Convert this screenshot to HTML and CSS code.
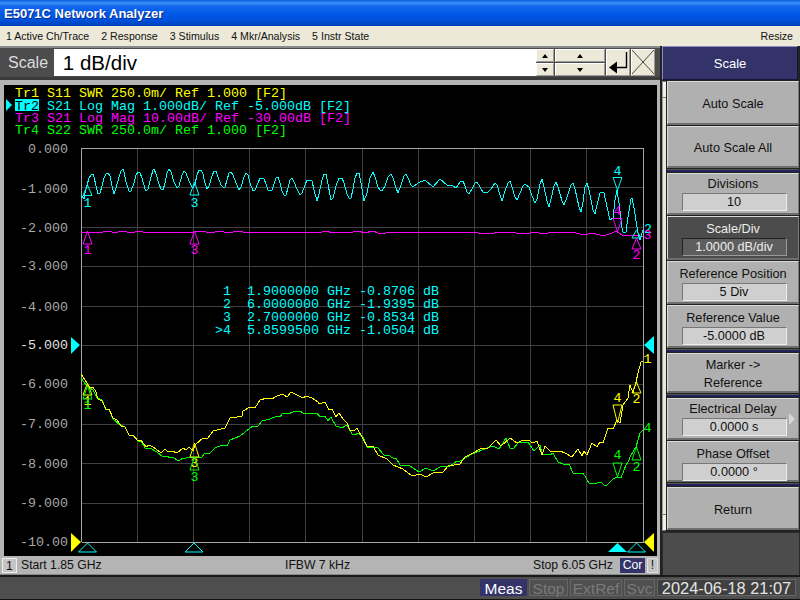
FILE: index.html
```html
<!DOCTYPE html>
<html lang="en">
<head>
    <meta charset="UTF-8">
    <meta name="viewport" content="width=device-width, initial-scale=1.0">
    <title>E5071C Network Analyzer</title>
    <link rel="stylesheet" href="styles.css">
</head>
<body>
<div class="app">
	<div class="title-bar">E5071C Network Analyzer</div>
	<div class="menu-bar">
		<span class="menu-item">1 Active Ch/Trace</span>
		<span class="menu-item">2 Response</span>
		<span class="menu-item">3 Stimulus</span>
		<span class="menu-item">4 Mkr/Analysis</span>
		<span class="menu-item">5 Instr State</span>
		<span class="menu-resize">Resize</span>
	</div>

	<div class="main">
		<div class="left">
			<!-- entry bar -->
			<div class="entry-bar">
				<span class="entry-label">Scale</span>
				<div class="entry-input">1 dB/div</div>
				<div class="spin spin-small">
					<div class="spin-btn"><i class="arrow-up"></i></div>
					<div class="spin-btn"><i class="arrow-down"></i></div>
				</div>
				<div class="spin spin-big">
					<div class="spin-btn"><i class="arrow-up"></i></div>
					<div class="spin-btn"><i class="arrow-down"></i></div>
				</div>
				<div class="entry-btn">
					<svg width="24" height="26" viewBox="0 0 24 26">
						<path d="M20.5 3V18.5H10" fill="none" stroke="#000" stroke-width="1.4"/>
						<path d="M3 18.5L11 12.5V24.5Z" fill="#000"/>
					</svg>
				</div>
				<div class="entry-btn">
					<svg width="24" height="26" viewBox="0 0 24 26">
						<path d="M1 1L23 25M23 1L1 25" fill="none" stroke="#222" stroke-width="0.8"/>
					</svg>
				</div>
			</div>

			<!-- chart, viewBox keeps the screen coordinates -->
			<div class="plot">
				<svg class="plot-svg" width="654" height="471" viewBox="4 85 654 471">
					<text class="tr yellow" x="15" y="97">Tr1 S11 SWR 250.0m/ Ref 1.000 [F2]</text>
					<polygon class="fill-cyan" points="6,99 12,105 6,111"/>
					<rect class="fill-cyan" x="15" y="99" width="24" height="12"/>
					<text class="tr black" x="15" y="110">Tr2</text>
					<text class="tr cyan" x="47" y="110">S21 Log Mag 1.000dB/ Ref -5.000dB [F2]</text>
					<text class="tr magenta" x="15" y="122">Tr3 S21 Log Mag 10.00dB/ Ref -30.00dB [F2]</text>
					<text class="tr green" x="15" y="134">Tr4 S22 SWR 250.0m/ Ref 1.000 [F2]</text>

					<g class="grid">
						<path d="M81 187.5H643M81 227H643M81 266.5H643M81 306H643M81 345.5H643M81 384.5H643M81 424H643M81 463.5H643M81 503H643"/>
						<path d="M137.5 148V542M193.5 148V542M249.5 148V542M305.5 148V542M362.5 148V542M418.5 148V542M474.5 148V542M530.5 148V542M586.5 148V542"/>
					</g>
					<path class="frame" d="M81.5 542V148.5H643.5V542.5H81.5"/>

					<g class="tr axis">
						<text x="68" y="153">0.000</text>
						<text x="68" y="193">-1.000</text>
						<text x="68" y="232">-2.000</text>
						<text x="68" y="270">-3.000</text>
						<text x="68" y="311">-4.000</text>
						<text class="axis-ref" x="68" y="349">-5.000</text>
						<text x="68" y="388">-6.000</text>
						<text x="68" y="428">-7.000</text>
						<text x="68" y="468">-8.000</text>
						<text x="68" y="507">-9.000</text>
						<text x="68" y="546">-10.00</text>
					</g>

					<polygon class="fill-cyan" points="71,337 80,345 71,354"/>
					<polygon class="fill-cyan" points="654,336 644,345 654,354"/>
					<polygon class="fill-yellow" points="71,533 81,542 71,552"/>
					<polygon class="fill-yellow" points="654,533 644,542 654,552"/>

					<polygon class="tick" points="87.5,543 78.5,552 96.5,552"/>
					<polygon class="tick" points="194,543 185,552 203,552"/>
					<polygon class="fill-cyan" points="617.5,543 608,552 627,552"/>
					<polygon class="tick" points="636.5,543 627.5,552 645.5,552"/>

					<polyline class="trace line-magenta" points="81,232 85,233 88,232 95,232 98,233 103,232 107,231 112,232 114,233 118,232 122,231 127,232 130,233 135,232 138,231 143,232 149,233 154,232 158,232 162,233 168,232 174,232 179,233 185,232 190,233 194,232 200,231 206,232 212,233 218,231 224,232 230,233 236,231 243,232 250,232 256,233 262,232 268,232 272,233 278,232 284,232 292,232 298,233 303,232 308,233 316,232 322,232 327,231 332,233 338,232 344,232 350,233 356,231 359,231 364,233 373,231 378,233 386,233 394,232 402,233 410,232 416,233 426,232 436,232 444,232 450,233 458,232 466,233 471,232 478,233 486,233 494,233 500,232 506,233 510,232 516,233 524,233 530,233 536,232 542,234 548,233 556,232 564,233 572,232 580,234 588,234 592,233 600,235 606,235 612,233 616,231 622,235 630,236 636,235 643,237"/>

					<polyline class="trace line-cyan" points="81,195 84,199 85,193 87,185 89,178 91,175 93,174 94,177 96,186 98,194 100,193 102,186 104,178 106,174 108,173 110,176 112,186 114,194 116,188 119,177 121,171 123,169 124,172 126,182 129,191 131,191 134,183 136,175 138,172 140,173 142,178 145,189 146,191 148,189 151,177 153,170 154,169 156,174 159,184 161,189 163,190 165,183 167,173 169,169 171,172 174,182 177,188 179,186 182,175 184,171 186,173 189,181 192,187 193,188 195,184 197,175 199,170 201,170 203,174 205,183 207,189 209,186 212,176 214,171 216,171 218,177 221,185 223,187 225,187 227,180 229,173 231,172 233,175 236,183 239,190 241,187 244,177 246,173 248,175 250,183 253,191 255,190 258,183 260,178 262,178 264,179 266,184 268,190 272,190 274,184 276,178 278,177 280,183 282,191 284,195 286,195 288,188 290,180 292,178 294,182 297,189 300,195 302,193 305,185 307,180 310,180 312,181 314,190 317,201 319,194 322,180 324,174 326,174 328,184 331,200 333,198 336,186 339,178 342,178 344,183 347,194 349,198 351,198 353,189 355,178 357,173 359,173 361,183 364,201 367,193 370,178 373,172 375,177 378,187 380,190 382,191 385,186 388,177 391,174 393,178 396,188 398,193 401,185 404,176 406,174 408,178 411,185 413,187 418,183 425,180 433,187 440,179 447,185 452,185 456,188 460,182 463,181 465,186 467,192 469,194 472,189 475,183 477,182 480,187 483,192 488,192 491,189 495,183 497,185 500,195 502,201 505,191 508,183 510,181 512,187 515,197 517,200 520,193 523,186 525,184 529,187 532,196 535,203 537,199 540,184 542,179 544,187 547,201 549,207 551,199 554,186 556,182 558,187 562,201 564,205 567,197 571,185 573,183 575,189 579,207 581,212 583,202 585,187 587,183 589,190 593,210 595,214 597,205 600,193 601,192 604,193 607,207 610,220 613,218 615,200 617,190 619,203 622,228 623,232 626,232 628,217 631,199 632,198 634,208 638,233 640,240 643,230"/>

					<polyline class="trace line-green" points="81,378 86,385 93,390 97,398 102,400 106,410 109,409 113,419 120,425 125,427 129,435 133,436 138,441 141,441 145,448 150,448 157,452 163,457 167,456 170,458 173,457 177,460 180,460 183,458 186,458 189,457 202,457 205,453 210,453 215,448 222,445 227,446 230,440 240,436 250,428 253,426 258,426 262,421 270,419 277,416 280,417 283,413 288,414 293,412 300,411 303,413 307,413 312,414 317,413 320,417 325,416 328,421 331,417 336,426 342,428 347,425 352,434 355,435 358,433 363,437 367,447 373,448 377,447 384,455 388,455 393,458 396,458 400,465 410,466 419,472 426,468 433,471 442,466 450,466 457,461 460,461 467,457 472,454 482,450 493,446 499,449 506,438 510,448 513,449 518,443 528,442 534,451 540,445 542,454 550,455 553,453 558,462 563,464 569,464 573,473 578,474 583,473 589,483 597,483 601,482 604,485 607,485 613,479 617,477 621,478 626,465 628,462 631,455 636,447 640,433 643,430"/>

					<polyline class="trace line-yellow" points="81,374 87,383 90,388 93,387 96,392 98,399 102,401 106,409 109,409 113,418 117,420 121,426 125,427 129,435 133,435 138,441 141,440 146,447 149,445 153,447 156,449 161,453 165,449 168,452 172,451 177,453 183,448 186,450 189,447 193,451 195,445 203,438 208,438 213,431 225,428 230,418 237,417 242,416 243,411 250,407 255,408 260,400 267,398 272,399 277,396 283,394 287,397 291,392 303,398 306,396 312,398 318,402 319,404 325,402 329,410 332,409 336,417 339,413 343,419 347,423 350,430 355,430 357,428 362,437 367,446 373,446 378,455 387,459 393,465 403,469 412,476 420,474 426,477 433,473 443,472 448,466 460,464 465,457 473,453 482,448 488,448 496,440 501,446 510,438 517,443 523,440 528,440 533,443 537,441 542,455 545,446 551,452 560,451 565,453 572,457 578,449 582,456 584,451 587,455 592,443 597,447 600,442 603,443 608,428 613,429 617,420 620,423 623,405 628,398 630,385 633,393 636,382 638,373 641,362 643,361"/>

					<!-- markers -->
					<g class="mark mark-cyan">
						<polygon points="87.5,185 83,195.5 92,195.5"/><text x="87.5" y="207">1</text>
						<polygon points="194.5,182 190,195 199,195"/><text x="194.5" y="207">3</text>
						<polygon points="617.5,190 613,177.5 622,177.5"/><text x="617.5" y="175">4</text>
						<polygon points="636.5,230 632,238 641,238"/>
						<text x="648" y="233">2</text>
					</g>
					<g class="mark mark-magenta">
						<polygon points="87.5,231 83,244 92,244"/><text x="87.5" y="254">1</text>
						<polygon points="194.5,231 190,244 199,244"/><text x="194.5" y="254">3</text>
						<polygon points="617.5,231.5 613,218.5 622,218.5"/><text x="617.5" y="215">4</text>
						<polygon points="636.5,238 632,249 641,249"/><text x="636.5" y="259">2</text>
						<text x="647.5" y="239">3</text>
					</g>
					<g class="mark mark-yellow">
						<polygon points="87.5,383 83,395 92,395"/><text x="87.5" y="405">1</text>
						<polygon points="194.5,443 190,457 199,457"/><text x="194.5" y="467">3</text>
						<polygon points="617.5,423 613,405 622,405"/><text x="617.5" y="402">4</text>
						<polygon points="636.5,382 632,393 641,393"/><text x="636.5" y="403">2</text>
						<text x="647.5" y="363">1</text>
					</g>
					<g class="mark mark-green">
						<polygon points="87.5,386 83,399 92,399"/><text x="87.5" y="409">1</text>
						<polygon points="194.5,457 190,470 199,470"/><text x="194.5" y="481">3</text>
						<polygon points="617.5,477 613,463 622,463"/><text x="617.5" y="459">4</text>
						<polygon points="636.5,447 632,460 641,460"/><text x="636.5" y="471">2</text>
						<text x="647.5" y="432">4</text>
					</g>

					<g class="tr cyan readout">
						<text xml:space="preserve" x="215" y="295"> 1  1.9000000 GHz -0.8706 dB</text>
						<text xml:space="preserve" x="215" y="308"> 2  6.0000000 GHz -1.9395 dB</text>
						<text xml:space="preserve" x="215" y="321"> 3  2.7000000 GHz -0.8534 dB</text>
						<text xml:space="preserve" x="215" y="334">&gt;4  5.8599500 GHz -1.0504 dB</text>
					</g>
				</svg>
			</div>

			<div class="status-bar">
				<span class="status-ch">1</span>
				<span class="status-start">Start 1.85 GHz</span>
				<span class="status-ifbw">IFBW 7 kHz</span>
				<span class="status-stop">Stop 6.05 GHz</span>
				<span class="status-cor">Cor</span>
				<span class="status-warn">!</span>
			</div>
		</div>

		<div class="side">
			<div class="key-head">Scale</div>
			<div class="side-body">
				<div class="strip"><i class="strip-btn"></i><i class="strip-btn"></i></div>
				<div class="keys">
					<div class="key">Auto Scale</div>
					<div class="key">Auto Scale All</div>
					<div class="key-sep"></div>
					<div class="key key-val key-tight">Divisions<span class="val">10</span></div>
					<div class="key key-val key-active">Scale/Div<span class="val">1.0000 dB/div</span></div>
					<div class="key key-val">Reference Position<span class="val">5 Div</span></div>
					<div class="key key-val">Reference Value<span class="val">-5.0000 dB</span></div>
					<div class="key-sep"></div>
					<div class="key">Marker -&gt;<br>Reference</div>
					<div class="key-sep"></div>
					<div class="key key-val key-tight key-more">Electrical Delay<span class="val">0.0000 s</span></div>
					<div class="key key-val">Phase Offset<span class="val">0.0000 °</span></div>
					<div class="key-sep"></div>
					<div class="key">Return</div>
				</div>
			</div>
			<div class="side-blank"></div>
		</div>
	</div>

	<div class="footer">
		<span class="flag flag-on flag-meas">Meas</span>
		<span class="flag flag-stop">Stop</span>
		<span class="flag flag-ext">ExtRef</span>
		<span class="flag flag-svc">Svc</span>
		<span class="flag flag-date">2024-06-18 21:07</span>
	</div>
</div>
</body>
</html>
```

FILE: styles.css
```css
* {box-sizing: border-box;}
html, body {margin: 0; padding: 0;}
body {width: 800px; height: 600px; overflow: hidden; background: #222; font-family: "Liberation Sans", Arial, sans-serif;}
.app {width: 800px; height: 600px; display: flex; flex-direction: column;}

/* title + menu */
.title-bar {height: 26px; padding: 0 4px; line-height: 27px; font-size: 13px; font-weight: bold; color: #fff; text-shadow: 1px 1px 0 #0a2a90;
	background: linear-gradient(to bottom, #0a5ce0 0, #3d92f8 3px, #1468ee 6px, #0058e6 14px, #0052dc 20px, #0040b8 26px);}
.menu-bar {height: 20px; display: flex; align-items: center; background: #ece9d8; font-size: 10.6px; color: #111; padding-left: 6px;}
.menu-item {margin-right: 12px;}
.menu-resize {margin-left: auto; margin-right: 7px;}

.main {height: 529px; display: flex;}
.left {width: 660px; display: flex; flex-direction: column;}

/* entry bar */
.entry-bar {height: 34px; display: flex; align-items: center; background: #4c4c4c; border-top: 2px solid #8a8a8a; border-bottom: 3px solid #3a3a3a; padding-right: 4px;}
.entry-label {width: 54px; padding-left: 8px; font-size: 16px; color: #ddd;}
.entry-input {width: 484px; height: 27px; background: #fff; padding-left: 9px; font-size: 20.5px; line-height: 27px; color: #000;}
.spin {display: flex; flex-direction: column; gap: 1px; height: 27px; margin-right: 1px;}
.spin-small {width: 18px;}
.spin-big {width: 50px;}
.spin-btn {flex: 1; display: flex; align-items: center; justify-content: center; background: #ece9d8; border: 1px solid; border-color: #fff #999 #999 #fff;}
.arrow-up {border: 3px solid transparent; border-top: 0; border-bottom: 4px solid #000;}
.arrow-down {border: 3px solid transparent; border-bottom: 0; border-top: 4px solid #000;}
.entry-btn {width: 24px; height: 27px; margin-right: 1px; background: #ece9d8; border: 1px solid; border-color: #fff #999 #999 #fff; overflow: hidden;}
.entry-btn svg {display: block; margin: -1px;}

/* plot */
.plot {height: 476px; background: #000; border: solid #b4b4b4; border-width: 5px 3px 0 4px; overflow: hidden;}
.plot-svg {display: block; margin-right: -1px;}
.tr {font-family: "Liberation Mono", "DejaVu Sans Mono", monospace; font-size: 13.33px; white-space: pre;}
.yellow {fill: #ffff00;}
.cyan {fill: #00ffff;}
.magenta {fill: #ff00ff;}
.green {fill: #00ff00;}
.black {fill: #000;}
.fill-cyan {fill: #00ffff;}
.fill-yellow {fill: #ffff00;}
.grid path {stroke: #404040; stroke-width: 1; fill: none; shape-rendering: crispEdges;}
.frame {stroke: #a8a8a8; stroke-width: 1; fill: none; shape-rendering: crispEdges;}
.axis text {fill: #a8a8a8; text-anchor: end;}
.axis .axis-ref {fill: #e0e0e0;}
.tick {fill: #000; stroke: #00ffff; stroke-width: 1;}
.trace {fill: none; stroke-width: 1; shape-rendering: crispEdges;}
.line-cyan {stroke: #00ffff;}
.line-magenta {stroke: #ff00ff;}
.line-yellow {stroke: #ffff00;}
.line-green {stroke: #00ff00;}
.mark text {font-family: "Liberation Mono", "DejaVu Sans Mono", monospace; font-size: 13.33px; text-anchor: middle;}
.mark polygon {fill: none; stroke-width: 1;}
.mark-cyan polygon {stroke: #00ffff;}
.mark-cyan text {fill: #00ffff;}
.mark-magenta polygon {stroke: #ff00ff;}
.mark-magenta text {fill: #ff00ff;}
.mark-yellow polygon {stroke: #ffff00;}
.mark-yellow text {fill: #ffff00;}
.mark-green polygon {stroke: #00ff00;}
.mark-green text {fill: #00ff00;}

/* status under the plot */
.status-bar {height: 19px; display: flex; align-items: center; background: #b4b4b4; font-size: 12.2px; color: #111; white-space: nowrap; border-bottom: 1px solid #888;}
.status-ch {width: 15px; height: 15px; flex-shrink: 0; margin-left: 2px; text-align: center; line-height: 14px; background: #c4c4c4; border: 1px solid #eee;}
.status-start {width: 80px; margin-left: 4px; flex-shrink: 0;}
.status-ifbw {width: 64px; margin-left: 184px; flex-shrink: 0;}
.status-stop {width: 80px; margin-left: 184px; flex-shrink: 0;}
.status-cor {width: 25px; height: 15px; flex-shrink: 0; margin-left: 7px; line-height: 15px; text-align: center; background: #33336a; color: #fff;}
.status-warn {width: 11px; height: 15px; flex-shrink: 0; margin-left: 2px; line-height: 13px; text-align: center; background: #c4c4c4; border: 1px solid #ddd;}

/* softkeys */
.side {width: 140px; display: flex; flex-direction: column; padding-left: 2px; background: #222;}
.key-head {height: 34px; margin-right: 2px; line-height: 33px; text-align: center; font-size: 13px; color: #fff; background: #33336a; border: 1px solid; border-color: #8c8cc0 #15153a #15153a #8c8cc0; flex-shrink: 0;}
.side-body {height: 450px; margin-top: 1px; display: flex; flex-shrink: 0;}
.strip {width: 4px; margin-right: 1px; display: flex; flex-direction: column; justify-content: space-between; background: #ece9d8; border-left: 1px solid #999;}
.strip-btn {display: block; height: 17px; background: #f4f2e8; border-bottom: 1px solid #777; border-top: 1px solid #777;}
.keys {flex: 1; margin-right: 1px; display: grid; gap: 1px; grid-template-rows: 44px 42px 3px 42px 44px 43px 43px 3px 40px 3px 42px 41px 3px 43px;}
.key {display: flex; flex-direction: column; align-items: center; justify-content: center; padding-top: 3px; text-align: center; font-size: 12.7px; line-height: 18px; color: #111; background: #b0b0b0; border: 1px solid; border-width: 1px 1px 2px 1px; border-color: #dcdcdc #7a7a7a #6e6e6e #dcdcdc;}
.key-sep {background: #22225a; border-top: 1px solid #555;}
.key-val {justify-content: flex-start; padding-top: 4px; line-height: 17px;}
.key-tight {padding-top: 2px;}
.val {width: 105px; height: 18px; margin-left: 2px; line-height: 16px; background: #cfcfcf; border: 1px solid; border-color: #777 #eee #eee #777;}
.key-active {background: #4c4c4c; color: #eee;}
.key-active .val {background: #5e5e5e; border-color: #222 #999 #999 #222; color: #eee;}
.key-more {position: relative;}
.key-more::after {content: ""; position: absolute; right: 3px; top: 14px; border: 6px solid transparent; border-right: 0; border-left: 6px solid #d8d8d8;}
.side-blank {height: 44px; margin-top: 1px; background: #4c4c4c; border: 1px solid #2a2a2a; flex-shrink: 0;}

/* bottom status line */
.footer {height: 25px; display: flex; align-items: stretch; padding: 2px 4px 3px 480px; background: #4e4e4e; border-top: 2px solid #1a1a1a; border-bottom: 1px solid #111;}
.flag {display: block; margin-right: 2px; font-size: 15.5px; line-height: 17px; text-align: center; color: #7a7a7a; background: #505050; border: 1px solid #666; white-space: nowrap;}
.flag-on {color: #fff; background: #33336a; border-color: #33336a;}
.flag-meas {width: 47px;}
.flag-stop {width: 39px;}
.flag-ext {width: 52px;}
.flag-svc {width: 31px;}
.flag-date {width: 139px; margin-right: 0; font-size: 16.4px; color: #e4e4e4; background: #404040;}
```
